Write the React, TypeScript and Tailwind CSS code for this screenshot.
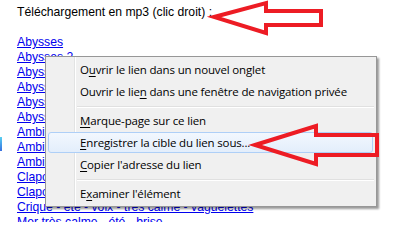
import React from 'react'

const links = [
  'Abysses',
  'Abysses 2',
  'Abysses 3',
  'Abysses 4',
  'Abysses 5',
  'Abysses 6',
  'Ambiance forêt',
  'Ambiance plage',
  'Ambiance port',
  'Clapotis 1',
  'Clapotis 2',
  'Crique - été - voix - très calme - vaguelettes',
  'Mer très calme - été - brise',
]

type Item = { before: string; key: string; after: string; hover?: boolean }

const groups: Item[][] = [
  [
    { before: 'O', key: 'u', after: 'vrir le lien dans un nouvel onglet' },
    { before: 'Ouvrir le lie', key: 'n', after: ' dans une fenêtre de navigation privée' },
  ],
  [
    { before: '', key: 'M', after: 'arque-page sur ce lien' },
    { before: '', key: 'E', after: 'nregistrer la cible du lien sous...', hover: true },
    { before: '', key: 'C', after: "opier l'adresse du lien" },
  ],
  [{ before: 'E', key: 'x', after: "aminer l'élément" }],
]

function MenuItem({ item }: { item: Item }) {
  return (
    <div className="relative h-[22px] flex items-center pl-[34px]">
      {item.hover && (
        <div className="absolute left-[2px] right-[3px] top-0 bottom-[1px] rounded-[3px] border border-[#aecff7] bg-gradient-to-b from-[#f2f7fe] to-[#e3eefb]" />
      )}
      <span className="relative whitespace-nowrap">
        {item.before}
        <span className="underline underline-offset-2">{item.key}</span>
        {item.after}
      </span>
    </div>
  )
}

function Arrows() {
  return (
    <svg className="absolute inset-0 pointer-events-none" width="397" height="222" viewBox="0 0 397 222">
      <polygon
        points="214,17 266,3 266,11 321,11 321,25 266,25 266,33"
        fill="none"
        stroke="#ed1c24"
        strokeWidth="4"
        strokeLinejoin="miter"
      />
      <polygon
        points="255,145 316,126 316,135 377,135 377,155 316,155 316,164"
        fill="none"
        stroke="#ed1c24"
        strokeWidth="4"
        strokeLinejoin="miter"
      />
    </svg>
  )
}

export default function App() {
  return (
    <div className="relative w-[397px] h-[222px] overflow-hidden bg-white">
      <div className="pl-[17px] pt-[5px] text-[12.2px] leading-[15px] text-black" style={{ fontFamily: '"Liberation Sans", Arial, sans-serif' }}>
        <p>Téléchargement en mp3 (clic droit) :</p>
        <p>&nbsp;</p>
        <div className="flex flex-col">
          {links.map((l) => (
            <a key={l} href="#" className="text-[#0000ee] underline whitespace-nowrap w-max">
              {l}
            </a>
          ))}
        </div>
      </div>

      <div className="absolute left-0 top-[137px] w-[2px] h-[14px] bg-gradient-to-b from-[#5ad0f0] to-[#3a6fe0]" />

      <div
        className="absolute left-[45px] top-[56px] w-[332px] border border-[#979797] bg-[#f0f0f0] pt-[2px] pb-[1px] text-[11.5px] tracking-[-0.15px] text-black shadow-[2px_2px_2px_rgba(0,0,0,0.4)]"
        style={{ fontFamily: '"Open Sans", "Noto Sans", sans-serif' }}
      >
        <div className="absolute left-[28px] top-0 bottom-0 w-[2px] border-l border-[#e2e3e3] bg-white" />
        {groups.map((g, gi) => (
          <div key={gi}>
            {gi > 0 && (
              <div className="h-[7px] flex flex-col justify-center pl-[31px] pr-[2px]">
                <div className="h-px bg-[#e0e0e0]" />
                <div className="h-px bg-white" />
              </div>
            )}
            {g.map((it, ii) => (
              <MenuItem key={ii} item={it} />
            ))}
          </div>
        ))}
      </div>

      <Arrows />
    </div>
  )
}
